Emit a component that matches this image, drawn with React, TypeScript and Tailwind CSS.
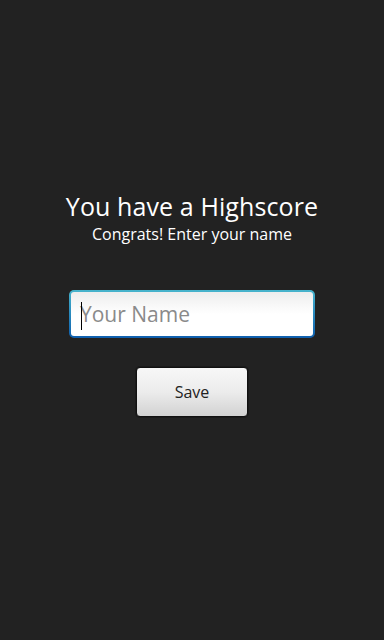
export default function App() {
  return (
    <div
      className="w-[384px] h-[640px] bg-[#222222] flex flex-col items-center pt-[189px]"
      style={{ fontFamily: '"Open Sans", "DejaVu Sans", sans-serif' }}
    >
      <h1 className="text-white text-[25px] leading-[34px] tracking-[0.1px]">
        You have a Highscore
      </h1>
      <p className="text-white text-[16px] leading-[20px] mt-[1px]">
        Congrats! Enter your name
      </p>

      {/* Name input */}
      <div className="mt-[46px] w-[246px] h-[48px] rounded-[5px] p-[2px] bg-gradient-to-b from-[#47b4cc] to-[#0f5fae]">
        <div className="w-full h-full rounded-[3px] bg-gradient-to-b from-[#ededed] via-white to-white flex items-center pl-[9px] relative">
          <span className="w-px h-[28px] bg-black absolute left-[10px] top-[10px]" />
          <span className="text-[#8a8a8a] text-[21px] leading-none">Your Name</span>
        </div>
      </div>

      {/* Save button */}
      <button className="mt-[29px] w-[112px] h-[50px] rounded-[4px] border border-[#111] bg-gradient-to-b from-[#f7f7f7] via-[#ececec] to-[#d2d2d2] text-[#222] text-[16px] shadow-[0_0_0_1px_#1a1a1a]">
        Save
      </button>
    </div>
  );
}
